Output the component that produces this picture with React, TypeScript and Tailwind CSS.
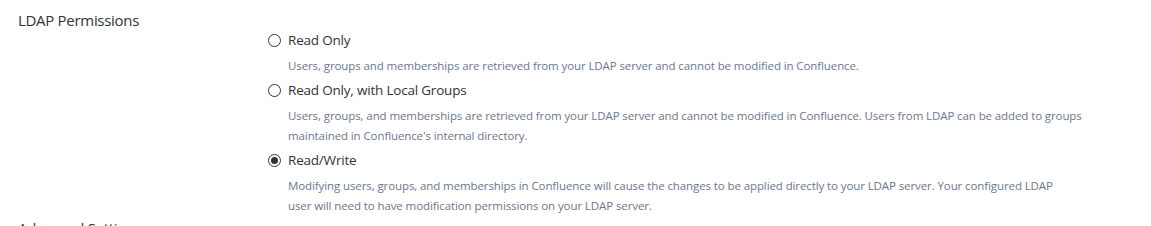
import { useState } from 'react';

type Option = {
  id: string;
  label: string;
  description: string;
};

// line breaks follow the original page's wrapping
const options: Option[] = [
  {
    id: 'read-only',
    label: 'Read Only',
    description:
      'Users, groups and memberships are retrieved from your LDAP server and cannot be modified in Confluence.',
  },
  {
    id: 'read-only-local',
    label: 'Read Only, with Local Groups',
    description:
      "Users, groups, and memberships are retrieved from your LDAP server and cannot be modified in Confluence. Users from LDAP can be added to groups\nmaintained in Confluence's internal directory.",
  },
  {
    id: 'read-write',
    label: 'Read/Write',
    description:
      'Modifying users, groups, and memberships in Confluence will cause the changes to be applied directly to your LDAP server. Your configured LDAP\nuser will need to have modification permissions on your LDAP server.',
  },
];

function Radio({ checked }: { checked: boolean }) {
  return (
    <span className="flex h-[13px] w-[13px] shrink-0 items-center justify-center rounded-full border border-[#333333] bg-white">
      {checked && <span className="h-[7px] w-[7px] rounded-full bg-[#333333]" />}
    </span>
  );
}

export default function App() {
  const [selected, setSelected] = useState('read-write');

  return (
    <div
      className="h-[226px] overflow-hidden bg-white pt-[10px] text-[#333333]"
      style={{ fontFamily: '"Open Sans", "Noto Sans", sans-serif' }}
    >
      <h3 className="pl-[18px] text-[15px] leading-5 tracking-[-0.3px]">LDAP Permissions</h3>

      <fieldset className="flex flex-col gap-1 pl-[268px]">
        {options.map(option => (
          <div key={option.id}>
            <label
              className="flex cursor-pointer items-center gap-[7px] text-[13.5px] leading-5 tracking-[-0.2px]"
              onClick={() => setSelected(option.id)}
            >
              <Radio checked={selected === option.id} />
              <span>{option.label}</span>
            </label>
            <p className="mt-[6px] w-[820px] whitespace-pre-line pl-[20px] text-[11.5px] leading-5 tracking-[-0.1px] text-[#6b778c]">
              {option.description}
            </p>
          </div>
        ))}
      </fieldset>

      <h3 className="mt-[2px] pl-[18px] text-[15px] leading-5 tracking-[-0.3px]">Advanced Settings</h3>
    </div>
  );
}
